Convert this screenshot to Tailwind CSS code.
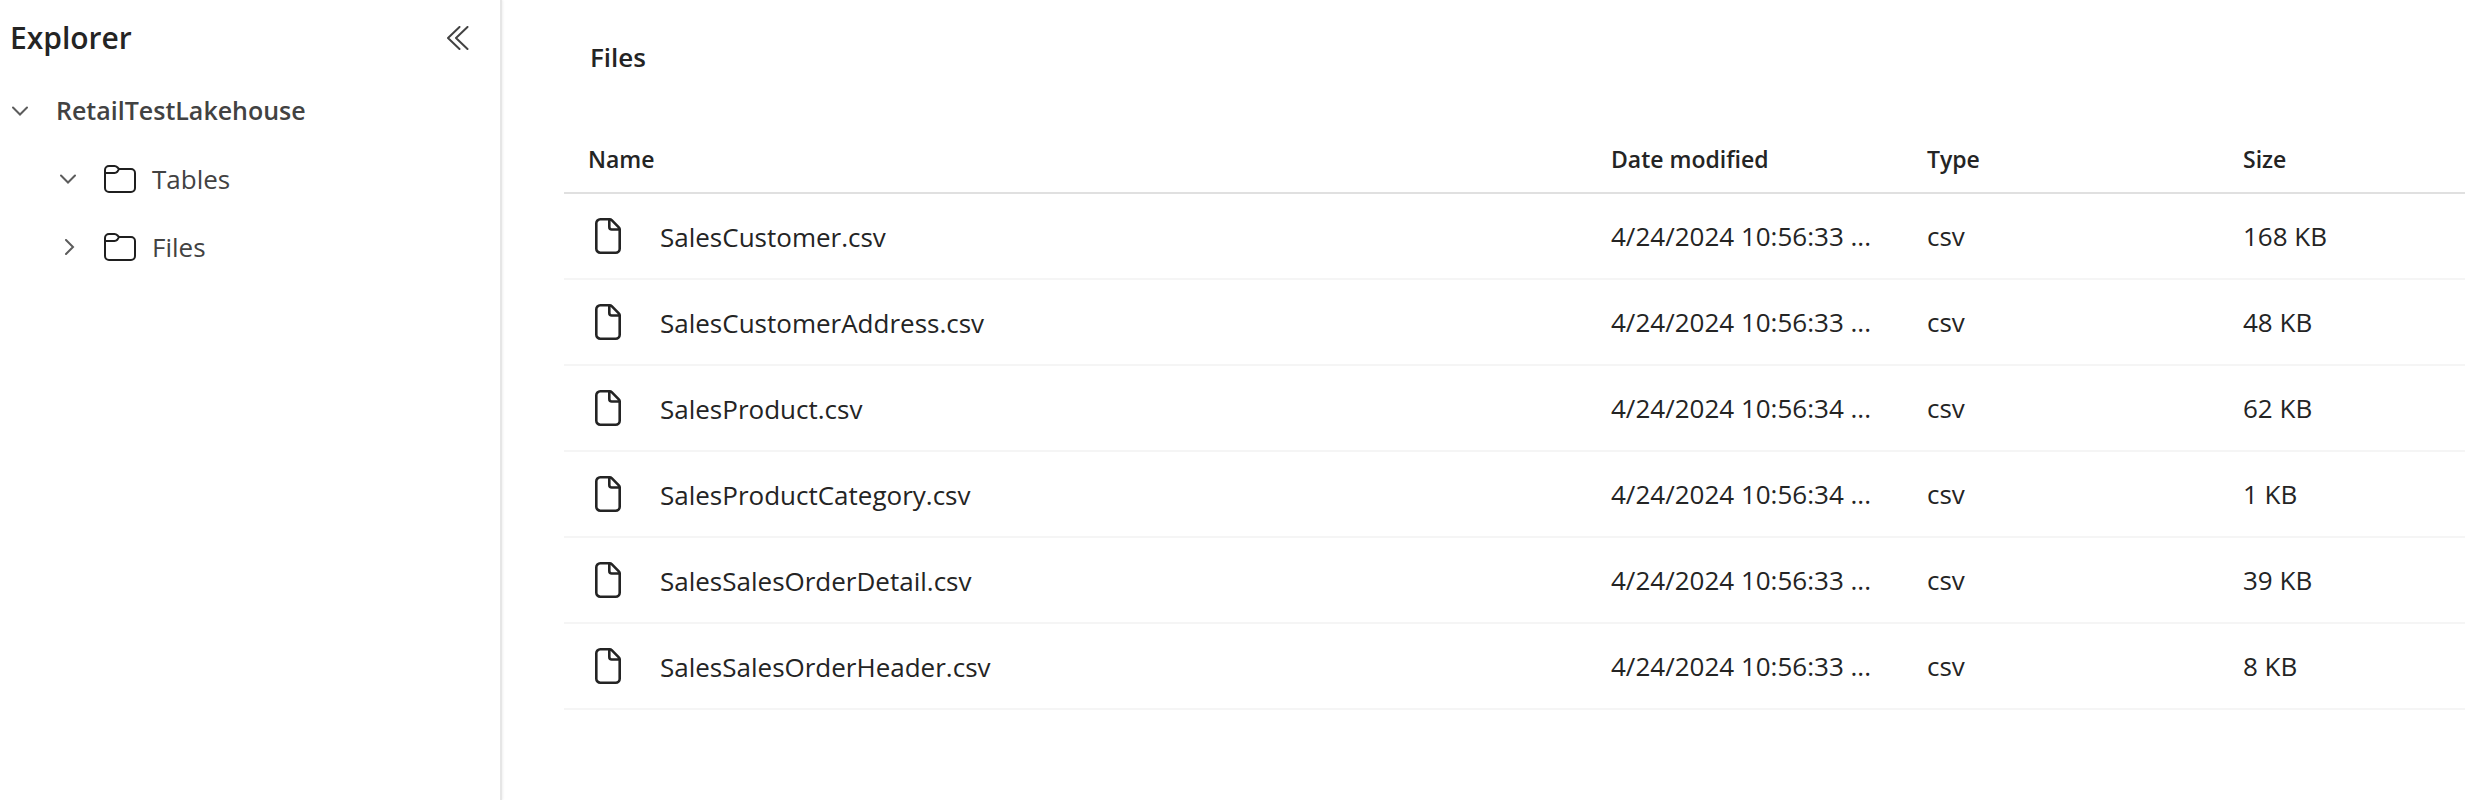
<!DOCTYPE html>
<html lang="en">
<head>
<meta charset="utf-8">
<title>Explorer</title>
<script src="https://cdn.jsdelivr.net/npm/@tailwindcss/browser@4"></script>
</head>
<body class="bg-white font-['Segoe_UI','Open_Sans',sans-serif] text-[26px] text-[#242424]">
<svg class="hidden" aria-hidden="true">
  <symbol id="doc" viewBox="0 0 26 36" fill="none" stroke="#242424" stroke-width="2.6" stroke-linejoin="round"><path d="M5.300 1.300h9.200a3 3 0 0 1 2.200.9l7.100 7.100a3 3 0 0 1 .9 2.200V30.700a4 4 0 0 1-4 4H5.300a4 4 0 0 1-4-4V5.300a4 4 0 0 1 4-4zM14.300 1.500V9a2.500 2.500 0 0 0 2.500 2.500h7.500"/></symbol>
  <symbol id="folder" viewBox="0 0 32 28" fill="none" stroke="#1f1f1f" stroke-width="2" stroke-linejoin="round"><path d="M1 5a4 4 0 0 1 4-4h5.500a4 4 0 0 1 2.800 1.200L15 4h12a4 4 0 0 1 4 4v15a4 4 0 0 1-4 4H5a4 4 0 0 1-4-4zM1 8h9.500a4 4 0 0 0 2.800-1.200L15 4"/></symbol>
  <symbol id="down" viewBox="0 0 16 16" fill="none" stroke="#5c5c5c" stroke-width="2" stroke-linecap="round"><path d="M1 4.500l7 7 7-7"/></symbol>
  <symbol id="right" viewBox="0 0 16 16" fill="none" stroke="#5c5c5c" stroke-width="2" stroke-linecap="round"><path d="M6 1l7 7-7 7"/></symbol>
</svg>
<div class="flex min-h-screen">
  <aside class="w-[502px] shrink-0 border-r-2 border-[#e6e6e6] shadow-[1px_0_2px_#00000010]">
    <header class="flex h-[77px] items-center justify-between pr-[30px] pb-[2px] pl-[10px]">
      <h1 class="text-[30px] font-semibold">Explorer</h1>
      <button type="button" aria-label="Collapse explorer" class="p-px"><svg class="h-6 w-[22px]" viewBox="0 0 22 24" fill="none" stroke="#424242" stroke-width="2" stroke-linecap="round" stroke-linejoin="round"><path d="M12.500 1L1 12l11.500 11M20.500 1L9 12l11.500 11"/></svg></button>
    </header>
    <ul class="text-[#424242]">
      <li>
        <button type="button" aria-expanded="true" class="flex h-[68px] w-full items-center gap-7 pl-3"><svg class="size-4"><use href="#down"/></svg><span class="text-[25px] font-semibold">RetailTestLakehouse</span></button>
        <ul>
          <li><button type="button" aria-expanded="true" class="flex h-[68px] w-full items-center pl-[60px]"><svg class="size-4"><use href="#down"/></svg><svg class="mr-4 ml-7 h-7 w-8"><use href="#folder"/></svg><span>Tables</span></button></li>
          <li><button type="button" aria-expanded="false" class="flex h-[68px] w-full items-center pl-[60px]"><svg class="size-4"><use href="#right"/></svg><svg class="mr-4 ml-7 h-7 w-8"><use href="#folder"/></svg><span>Files</span></button></li>
        </ul>
      </li>
    </ul>
  </aside>
  <main class="min-w-0 flex-1 pl-[62px]">
    <h2 class="flex h-[86px] items-center pt-7 pl-[26px] font-semibold">Files</h2>
    <table class="w-full table-fixed border-collapse text-left whitespace-nowrap">
      <thead class="text-[23px]">
        <tr class="h-[107px] border-b-2 border-[#e0e0e0]">
          <th scope="col" class="pt-10 pl-6 font-semibold">Name</th>
          <th scope="col" class="w-[316px] pt-10 pl-6 font-semibold">Date modified</th>
          <th scope="col" class="w-[316px] pt-10 pl-6 font-semibold">Type</th>
          <th scope="col" class="w-[246px] pt-10 pl-6 font-semibold">Size</th>
        </tr>
      </thead>
      <tbody>
        <tr class="h-[86px] border-b-2 border-[#f5f5f5]"><td class="pl-[31px]"><div class="flex items-center gap-[39px]"><svg class="h-9 w-[26px]"><use href="#doc"/></svg><a href="#" class="pt-[3px]">SalesCustomer.csv</a></div></td><td class="pl-6">4/24/2024 10:56:33 ...</td><td class="pl-6">csv</td><td class="pl-6">168 KB</td></tr>
        <tr class="h-[86px] border-b-2 border-[#f5f5f5]"><td class="pl-[31px]"><div class="flex items-center gap-[39px]"><svg class="h-9 w-[26px]"><use href="#doc"/></svg><a href="#" class="pt-[3px]">SalesCustomerAddress.csv</a></div></td><td class="pl-6">4/24/2024 10:56:33 ...</td><td class="pl-6">csv</td><td class="pl-6">48 KB</td></tr>
        <tr class="h-[86px] border-b-2 border-[#f5f5f5]"><td class="pl-[31px]"><div class="flex items-center gap-[39px]"><svg class="h-9 w-[26px]"><use href="#doc"/></svg><a href="#" class="pt-[3px]">SalesProduct.csv</a></div></td><td class="pl-6">4/24/2024 10:56:34 ...</td><td class="pl-6">csv</td><td class="pl-6">62 KB</td></tr>
        <tr class="h-[86px] border-b-2 border-[#f5f5f5]"><td class="pl-[31px]"><div class="flex items-center gap-[39px]"><svg class="h-9 w-[26px]"><use href="#doc"/></svg><a href="#" class="pt-[3px]">SalesProductCategory.csv</a></div></td><td class="pl-6">4/24/2024 10:56:34 ...</td><td class="pl-6">csv</td><td class="pl-6">1 KB</td></tr>
        <tr class="h-[86px] border-b-2 border-[#f5f5f5]"><td class="pl-[31px]"><div class="flex items-center gap-[39px]"><svg class="h-9 w-[26px]"><use href="#doc"/></svg><a href="#" class="pt-[3px]">SalesSalesOrderDetail.csv</a></div></td><td class="pl-6">4/24/2024 10:56:33 ...</td><td class="pl-6">csv</td><td class="pl-6">39 KB</td></tr>
        <tr class="h-[86px] border-b-2 border-[#f5f5f5]"><td class="pl-[31px]"><div class="flex items-center gap-[39px]"><svg class="h-9 w-[26px]"><use href="#doc"/></svg><a href="#" class="pt-[3px]">SalesSalesOrderHeader.csv</a></div></td><td class="pl-6">4/24/2024 10:56:33 ...</td><td class="pl-6">csv</td><td class="pl-6">8 KB</td></tr>
      </tbody>
    </table>
  </main>
</div>
</body>
</html>
